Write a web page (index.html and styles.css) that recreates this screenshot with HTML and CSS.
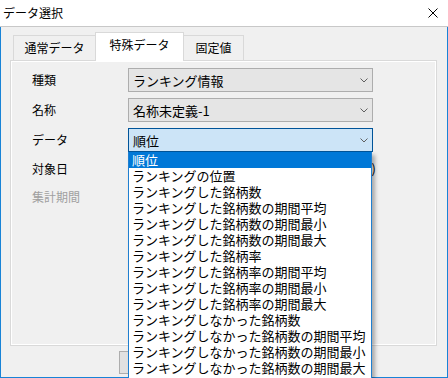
FILE: index.html
```html
<!DOCTYPE html>
<html lang="ja">
<head>
    <meta charset="UTF-8">
    <meta name="viewport" content="width=device-width, initial-scale=1.0">
    <title>データ選択</title>
    <link rel="stylesheet" href="styles.css">
</head>
<body>
    <!-- ウィンドウ全体 -->
    <div class="window">
        <!-- タイトルバー -->
        <div class="titlebar">
            <span class="title">データ選択</span>
            <svg class="close" width="10" height="10" viewBox="0 0 10 10">
                <path d="M0.5 0.5 L9.5 9.5 M9.5 0.5 L0.5 9.5" stroke="#000" stroke-width="1" fill="none"/>
            </svg>
        </div>

        <div class="frame">
            <!-- タブ -->
            <div class="tabs">
                <div class="tab">通常データ</div>
                <div class="tab active">特殊データ</div>
                <div class="tab">固定値</div>
            </div>

            <!-- タブの中身 -->
            <div class="panel">
                <div class="form">
                    <div class="label">種類</div>
                    <div class="combo">
                        <span>ランキング情報</span>
                        <svg class="chevron" width="8" height="5" viewBox="0 0 8 5"><path d="M0.5 0.5 L4 4 L7.5 0.5" stroke="#606060" fill="none"/></svg>
                    </div>

                    <div class="label">名称</div>
                    <div class="combo">
                        <span>名称未定義-1</span>
                        <svg class="chevron" width="8" height="5" viewBox="0 0 8 5"><path d="M0.5 0.5 L4 4 L7.5 0.5" stroke="#606060" fill="none"/></svg>
                    </div>

                    <div class="label">データ</div>
                    <div class="combo focus">
                        <span>順位</span>
                        <svg class="chevron" width="8" height="5" viewBox="0 0 8 5"><path d="M0.5 0.5 L4 4 L7.5 0.5" stroke="#606060" fill="none"/></svg>

                        <!-- 開いているドロップダウンリスト -->
                        <ul class="dropdown">
                            <li class="selected">順位</li>
                            <li>ランキングの位置</li>
                            <li>ランキングした銘柄数</li>
                            <li>ランキングした銘柄数の期間平均</li>
                            <li>ランキングした銘柄数の期間最小</li>
                            <li>ランキングした銘柄数の期間最大</li>
                            <li>ランキングした銘柄率</li>
                            <li>ランキングした銘柄率の期間平均</li>
                            <li>ランキングした銘柄率の期間最小</li>
                            <li>ランキングした銘柄率の期間最大</li>
                            <li>ランキングしなかった銘柄数</li>
                            <li>ランキングしなかった銘柄数の期間平均</li>
                            <li>ランキングしなかった銘柄数の期間最小</li>
                            <li>ランキングしなかった銘柄数の期間最大</li>
                        </ul>
                    </div>

                    <div class="label">対象日</div>
                    <div class="date">2024/01/01(月)</div>

                    <div class="label disabled">集計期間</div>
                    <div></div>
                </div>
            </div>

            <!-- 下のボタン -->
            <div class="footer">
                <button class="btn">OK</button>
            </div>
        </div>
    </div>
</body>
</html>
```

FILE: styles.css
```css
/* ページ全体 */
body {
    margin: 0;
    width: 448px;
    height: 378px;
    overflow: hidden;
    font-family: "Noto Sans CJK JP", "Noto Sans", sans-serif;
    font-size: 12px;
    color: #000;
    background: #f0f0f0;
}

.window {
    height: 378px;
    display: flex;
    flex-direction: column;
}

/* タイトルバー */
.titlebar {
    height: 26px;
    background: #fff;
    border-bottom: 1px solid #c8c8c8;
    display: flex;
    align-items: center;
    justify-content: space-between;
    padding: 0 10px 0 3px;
}

.title {
    font-size: 12px;
    line-height: 14px;
}

.close {
    display: block;
    margin-top: 0;
}

/* ウィンドウ枠 */
.frame {
    flex: 1;
    border: 1px solid #1883d7;
    border-top: none;
    background: #f0f0f0;
}

/* タブ */
.tabs {
    display: flex;
    align-items: flex-end;
    height: 28px;
    padding-top: 5px;
    margin-left: 12px;
}

.tab {
    height: 24px;
    line-height: 24px;
    border: 1px solid #d9d9d9;
    border-bottom: none;
    background: #f0f0f0;
    text-align: center;
    box-sizing: content-box;
}

.tab:nth-child(1) {
    width: 81px;
}

.tab:nth-child(2) {
    width: 87px;
    margin-left: -1px;
}

.tab:nth-child(3) {
    width: 59px;
    margin-left: -1px;
}

/* 選択中のタブ */
.tab.active {
    height: 28px;
    line-height: 24px;
    background: #fff;
    margin-bottom: -1px;
    position: relative;
    z-index: 1;
}

/* タブの中身 */
.panel {
    width: 425px;
    height: 284px;
    margin-left: 9px;
    border: 1px solid #d9d9d9;
    box-shadow: inset 1px 1px 0 #fff, inset -1px -1px 0 #fff;
    background: #f0f0f0;
    padding: 7px 0 0 21px;
    box-sizing: border-box;
    width: 427px;
    height: 286px;
}

.form {
    display: grid;
    grid-template-columns: 96px 245px;
    grid-template-rows: 24px 24px 24px 22px 22px;
    row-gap: 6px;
}

.label {
    align-self: center;
    font-size: 12px;
    line-height: 16px;
}

.label.disabled {
    color: #a0a0a0;
}

/* コンボボックス */
.combo {
    position: relative;
    border: 1px solid #adadad;
    background: #e5e5e5;
    display: flex;
    align-items: center;
    justify-content: space-between;
    padding: 0 4px 0 4px;
    font-size: 13px;
    box-sizing: border-box;
}

.combo.focus {
    border-color: #005499;
    background: #cce4f7;
}

.chevron {
    display: block;
}

/* ドロップダウン */
.dropdown {
    position: absolute;
    top: 23px;
    left: -1px;
    width: 244px;
    margin: 0;
    padding: 0 0 6px 0;
    list-style: none;
    background: #fff;
    border: 1px solid #1f7fd0;
    border-top: none;
    box-sizing: border-box;
    box-shadow: 3px 3px 4px rgba(0, 0, 0, 0.3);
    z-index: 5;
}

.dropdown li {
    height: 16px;
    line-height: 16px;
    padding-left: 3px;
    font-size: 13px;
    white-space: nowrap;
}

.dropdown li.selected {
    background: #0078d7;
    color: #fff;
}

/* 対象日（リストの下に隠れている） */
.date {
    width: 248px;
    text-align: right;
    font-size: 13px;
    line-height: 22px;
    overflow: hidden;
    white-space: nowrap;
}

/* 下部 */
.footer {
    padding: 5px 0 0 118px;
}

.btn {
    width: 75px;
    height: 23px;
    border: 1px solid #adadad;
    background: #e1e1e1;
    font-family: inherit;
    font-size: 12px;
    padding: 0;
}
```
